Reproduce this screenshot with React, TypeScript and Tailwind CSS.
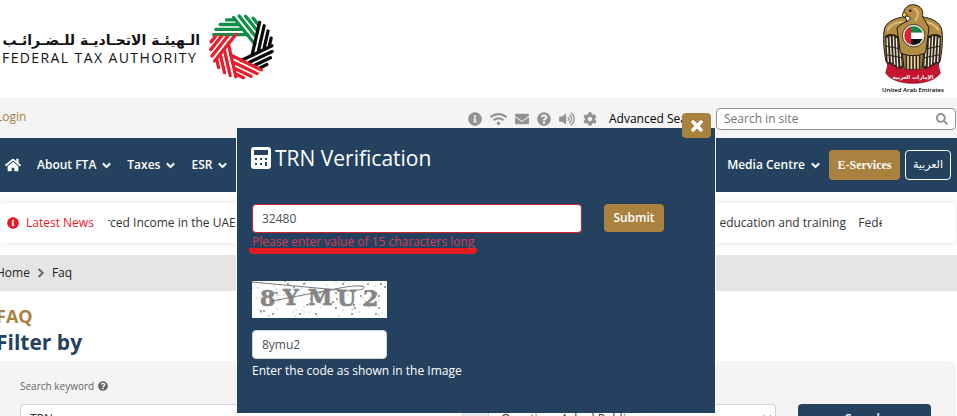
import React, { useState } from 'react';
import {
  FaInfoCircle,
  FaWifi,
  FaEnvelope,
  FaQuestionCircle,
  FaVolumeUp,
  FaCog,
  FaTimes,
  FaHome,
  FaChevronDown,
  FaChevronRight,
  FaSearch,
} from 'react-icons/fa';

const logoColors = ['#0f8f47', '#0f8f47', '#0b0b0b', '#0b0b0b', '#e8202e', '#e8202e', '#e8202e'];

function FtaMark() {
  return (
    <svg viewBox="-102 -100 204 204" className="w-[67px] h-[67px]" aria-hidden="true">
      {logoColors.map((color, i) => (
        <g key={i} transform={`rotate(${(i * 360) / 7})`} stroke={color} strokeWidth="10" strokeLinecap="round">
          <path d="M-85 -37H19M-78 -53H-2M-65 -68H-12M-46 -82H-24" />
        </g>
      ))}
    </svg>
  );
}

function Feathers({ side }: { side: 1 | -1 }) {
  return (
    <g transform={side === 1 ? undefined : 'translate(180 0) scale(-1 1)'}>
      <path
        d="M66 38C36 42 5 54 3 82C0 112 4 148 9 172L18 187L24 178L31 194L38 186L47 202L62 190L74 150L80 70Z"
        fill="#b58d45"
        stroke="#1c1710"
        strokeWidth="3"
      />
      <path d="M6 96C24 84 40 92 54 104L60 188L47 202L38 186L31 194L24 178L18 187L9 172Z" fill="#2c251b" />
      <path
        d="M12 101L16 174M21 97L26 176M31 97L35 182M40 102L44 188M49 108L54 186"
        stroke="#f3ead8"
        strokeWidth="4"
        fill="none"
      />
      <path d="M8 126L58 136M9 152L60 162" stroke="#2c251b" strokeWidth="3" />
      <path d="M14 78C24 60 42 54 60 54" stroke="#dcbd7c" strokeWidth="6" fill="none" strokeLinecap="round" />
    </g>
  );
}

function Emblem() {
  return (
    <svg viewBox="0 -3 180 243" className="w-[60px] h-[81px]" role="img" aria-label="UAE emblem">
      <Feathers side={1} />
      <Feathers side={-1} />
      <path d="M58 145L64 204H116L122 145Z" fill="#a87f38" stroke="#1c1710" strokeWidth="3" />
      <path d="M70 150V200M80 150V200M90 150V200M100 150V200M110 150V200" stroke="#33291a" strokeWidth="4" />
      <path d="M75 152V194M85 152V194M95 152V194M105 152V194" stroke="#f3ead6" strokeWidth="3" />
      <path
        d="M62 24C66 6 84 -2 101 4C119 11 121 25 118 34C120 44 130 54 138 72L128 146C104 158 76 158 52 146L42 72C56 54 80 53 82 42C76 35 69 35 64 40L58 33Z"
        fill="#b58d45"
        stroke="#1c1710"
        strokeWidth="3"
      />
      <path d="M62 24L57 34L64 40L73 31Z" fill="#efc949" stroke="#1c1710" strokeWidth="2" />
      <circle cx="82" cy="20" r="3.5" fill="#1c1710" />
      <path d="M94 14C108 20 107 38 98 48" stroke="#dcbd7c" strokeWidth="6" fill="none" strokeLinecap="round" />
      <clipPath id="flag">
        <circle cx="92" cy="95" r="28" />
      </clipPath>
      <circle cx="92" cy="95" r="34" fill="#e9e2d3" stroke="#4a3a1c" strokeWidth="3" />
      <g clipPath="url(#flag)">
        <path d="M60 64H122V86H60Z" fill="#128447" />
        <path d="M60 86H122V105H60Z" fill="#fff" />
        <path d="M60 105H122V128H60Z" fill="#111" />
        <path d="M60 64H84V128H60Z" fill="#df2334" />
      </g>
      <path
        d="M16 176C30 186 46 197 90 197C134 197 150 186 164 176L172 207C160 226 130 238 90 238C50 238 20 226 8 207Z"
        fill="#c5162f"
        stroke="#760d1c"
        strokeWidth="2"
      />
      <text x="90" y="225" textAnchor="middle" fontSize="16" fontWeight="700" fill="#fff" fontFamily="DejaVu Sans, sans-serif">
        الإمارات العربية
      </text>
    </svg>
  );
}

function CalculatorIcon() {
  return (
    <svg viewBox="0 0 20 22" className="w-5 h-[22px]" aria-hidden="true">
      <path
        fill="currentColor"
        fillRule="evenodd"
        d="M3 0H17A3 3 0 0 1 20 3V19A3 3 0 0 1 17 22H3A3 3 0 0 1 0 19V3A3 3 0 0 1 3 0ZM3 3V8H17V3ZM4 11V13H6V11ZM9 11V13H11V11ZM14 11V13H16V11ZM4 16V18H6V16ZM9 16V18H11V16ZM14 15V19H16V15Z"
      />
    </svg>
  );
}

// Specks scattered over the captcha background
const specks = Array.from({ length: 110 }, (_, i) => ({
  x: (i * 47 + ((i * i) % 13) * 5) % 134,
  y: (i * 23 + ((i * i) % 7) * 3) % 36,
  r: i % 3 === 0 ? 0.9 : 0.5,
}));

function Captcha() {
  return (
    <svg viewBox="0 0 135 37" className="w-[135px] h-[37px] bg-white" role="img" aria-label="Captcha">
      {specks.map((s, i) => (
        <circle key={i} cx={s.x} cy={s.y} r={s.r} fill="#777" />
      ))}
      <g fill="#858585" stroke="#858585" strokeWidth="0.6" fontFamily="DejaVu Serif, serif" fontWeight="700" fontSize="22">
        <text x="8" y="25">8</text>
        <text x="31" y="24">Y</text>
        <text x="56" y="24">M</text>
        <text x="85" y="25">U</text>
        <text x="111" y="25">2</text>
      </g>
      <path d="M0 1L86 9C103 10 113 9 112 6C110 4 98 5 88 7L20 20" fill="none" stroke="#777" strokeWidth="1" />
    </svg>
  );
}

const tools = [
  { icon: FaInfoCircle, label: 'Information', size: 'w-3.5 h-3.5' },
  { icon: FaWifi, label: 'Feeds', size: 'w-[17px] h-3.5' },
  { icon: FaEnvelope, label: 'Contact', size: 'w-3.5 h-3.5' },
  { icon: FaQuestionCircle, label: 'Help', size: 'w-3.5 h-3.5' },
  { icon: FaVolumeUp, label: 'Listen', size: 'w-4 h-3.5' },
  { icon: FaCog, label: 'Settings', size: 'w-3.5 h-3.5' },
];

function NavLink({ label }: { label: string }) {
  return (
    <a href="#" className="flex items-center gap-1.5 text-[12px] font-semibold whitespace-nowrap">
      {label}
      <FaChevronDown className="w-[9px] h-[9px] stroke-current stroke-[50]" />
    </a>
  );
}

function TrnDialog({ onClose }: { onClose: () => void }) {
  const [trn, setTrn] = useState('32480');
  const [code, setCode] = useState('8ymu2');

  return (
    <div className="absolute inset-x-0 top-32 flex justify-center pr-[5px]">
      <div role="dialog" aria-labelledby="trn-title" className="relative w-[480px] h-[285px] border-x border-white bg-[#24425f] px-[15px] pt-[18px] text-white">
        <button
          aria-label="Close"
          onClick={onClose}
          className="absolute -top-[15px] right-1 w-[29px] h-[25px] rounded-sm bg-[#a98240] flex items-center justify-center"
        >
          <FaTimes className="w-4 h-4 stroke-current stroke-[30]" />
        </button>
        <h2 id="trn-title" className="-ml-px flex items-center gap-1 text-[21px] leading-6">
          <CalculatorIcon />
          TRN Verification
        </h2>
        <form onSubmit={(e) => e.preventDefault()} className="mt-[34px]">
          <div className="flex gap-[22px]">
            <input
              aria-label="TRN"
              value={trn}
              onChange={(e) => setTrn(e.target.value)}
              className="w-[330px] h-[29px] rounded-sm border border-[#d8202c] bg-white px-[9px] text-[12px] text-[#495057]"
            />
            <button type="submit" className="w-[60px] h-7 rounded-sm bg-[#a98240] text-[12px] font-semibold">
              Submit
            </button>
          </div>
          <p className="-ml-[3px] w-[228px] h-[21px] pt-px border-b-[6px] border-[#e31b1e] rounded-b-sm pl-[3px] text-[12px] leading-4 text-[#d33d53] whitespace-nowrap">
            Please enter value of 15 characters long
          </p>
          <div className="mt-[27px]">
            <Captcha />
          </div>
          <input
            id="captcha-code"
            value={code}
            onChange={(e) => setCode(e.target.value)}
            className="block mt-3 w-[135px] h-[29px] rounded-sm border border-[#ced4da] bg-white px-[9px] text-[12px] text-[#495057]"
          />
          <label htmlFor="captcha-code" className="block mt-1 text-[12px] leading-4">
            Enter the code as shown in the Image
          </label>
        </form>
      </div>
    </div>
  );
}

function App() {
  const [open, setOpen] = useState(true);

  return (
    <div className="relative h-screen overflow-hidden bg-white font-['Open_Sans',sans-serif] text-[12px] text-[#333]">
      {/* Header */}
      <header className="h-[99px] flex items-start justify-between pl-0.5 pr-[13px] border-b border-[#eee]">
        <div className="flex items-center gap-2 pt-3.5">
          <div className="w-[198px] text-[#111]">
            <div lang="ar" dir="rtl" className="font-['DejaVu_Sans',sans-serif] text-[14px] leading-5 font-bold whitespace-nowrap">
              الـهيئـة الاتحـاديـة للـضـرائـب
            </div>
            <div className="text-[14px] leading-4 font-medium tracking-widest whitespace-nowrap">FEDERAL TAX AUTHORITY</div>
          </div>
          <FtaMark />
        </div>
        <div className="flex flex-col items-center pt-[3px]">
          <Emblem />
          <div className="text-[6px] leading-3 font-semibold text-black">United Arab Emirates</div>
        </div>
      </header>

      {/* Tool bar */}
      <div className="h-[39px] bg-[#f4f4f4] flex items-center justify-between">
        <a href="#" className="-ml-1 pb-1 text-[#a98240]">Login</a>
        <div className="flex items-center pr-px">
          <div className="flex items-center gap-2 text-[#929292] mr-3">
            {tools.map(({ icon: Icon, label, size }) => (
              <button key={label} aria-label={label}>
                <Icon className={size} />
              </button>
            ))}
          </div>
          <a href="#" className="w-[107px] text-black whitespace-nowrap">Advanced Search</a>
          <div className="w-60 h-[22px] flex items-center rounded-sm border border-[#929292] bg-white px-[7px]">
            <input type="search" aria-label="Search in site" placeholder="Search in site" className="flex-1 min-w-0 placeholder:text-[#757575]" />
            <button aria-label="Search">
              <FaSearch className="w-3 h-3 text-[#929292]" />
            </button>
          </div>
        </div>
      </div>

      {/* Navigation */}
      <nav className="h-[54px] bg-[#24425f] text-white flex items-center justify-between pl-[5px] pr-1.5">
        <div className="flex items-center gap-4">
          <a href="#" aria-label="Home">
            <FaHome className="w-4 h-4" />
          </a>
          <NavLink label="About FTA" />
          <NavLink label="Taxes" />
          <NavLink label="ESR" />
        </div>
        <div className="flex items-center">
          <NavLink label="Media Centre" />
          <a href="#" className="ml-[9px] w-[71px] h-[30px] rounded-sm bg-[#a98240] flex items-center justify-center font-['Liberation_Serif',serif] font-bold">
            E-Services
          </a>
          <a href="#" lang="ar" className="ml-[5px] w-[46px] h-[30px] rounded-sm border border-white flex items-center justify-center font-['DejaVu_Sans',sans-serif] text-[11px]">
            العربية
          </a>
        </div>
      </nav>

      {/* News ticker */}
      <div className="mt-[11px] mr-px h-10 flex items-center rounded-sm bg-white shadow-[0_0_8px_rgba(0,0,0,0.12)] pl-[7px]">
        <FaInfoCircle className="w-3 h-3 text-[#e31b2a]" />
        <span className="ml-[7px] text-[#e31b2a] whitespace-nowrap">Latest News</span>
        <div className="ml-[14px] mr-[74px] flex-1 min-w-0 flex justify-between overflow-hidden whitespace-nowrap">
          <span className="-ml-2.5">urced Income in the UAE</span>
          <span className="-mr-[18px]">tional education and training&nbsp;&nbsp;&nbsp; Federal</span>
        </div>
      </div>

      {/* Breadcrumb */}
      <div className="mt-3 h-9 bg-[#e5e5e5] flex items-center gap-1.5 text-[#222]">
        <a href="#" className="-ml-1">Home</a>
        <FaChevronRight className="w-2.5 h-2.5 text-[#666] stroke-current stroke-[30]" />
        <span>Faq</span>
      </div>

      <main>
        <div className="-ml-1 pt-[11px] font-bold">
          <h1 className="text-[18px] leading-7 text-[#a98240]">FAQ</h1>
          <h2 className="text-[21px] leading-6 text-[#24425f]">Filter by</h2>
        </div>
        <div className="mt-[7px] mr-px rounded-tr-lg bg-[#f4f4f4] pl-5 pr-[25px] pt-[17px] pb-8">
          <label htmlFor="keyword" className="flex items-center gap-1 text-[10px] leading-4 text-[#666]">
            Search keyword <FaQuestionCircle className="w-2.5 h-2.5" />
          </label>
          <div className="mt-2.5 flex">
            <input id="keyword" defaultValue="TRN" className="w-[443px] h-[29px] rounded-l-sm border border-[#ced4da] bg-white px-[9px]" />
            <span className="w-[26px] h-[29px] border-y border-r border-[#ced4da] bg-[#e9ecef]" />
            <select aria-label="Category" className="flex-1 h-[29px] rounded-r-sm border border-l-0 border-[#ced4da] bg-white px-2">
              <option>Questions Asked Public</option>
            </select>
            <button className="ml-[22px] w-[133px] h-[29px] rounded-sm bg-[#24425f] text-white font-semibold">Search</button>
          </div>
        </div>
      </main>

      {open && <TrnDialog onClose={() => setOpen(false)} />}
    </div>
  );
}

export default App;
